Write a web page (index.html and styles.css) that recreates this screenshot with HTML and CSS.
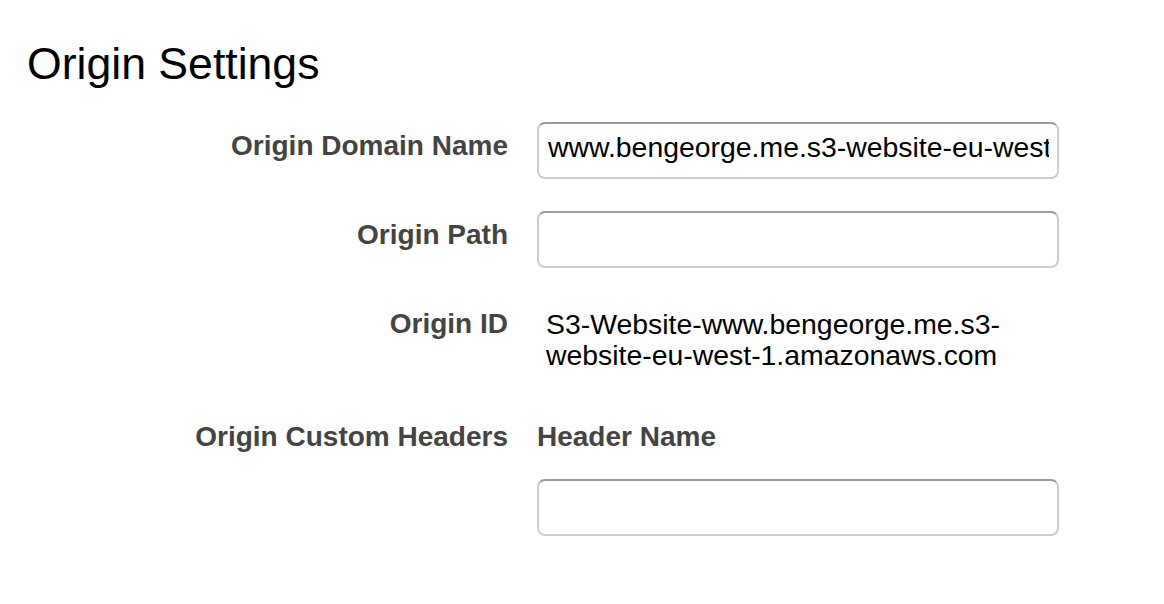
FILE: index.html
```html
<!DOCTYPE html>
<html lang="en">
<head>
<meta charset="utf-8">
<title>Origin Settings</title>
<link rel="stylesheet" href="styles.css">
</head>
<body>
<main class="page">
  <h1 class="title">Origin Settings</h1>
  <div class="form">
    <div class="row">
      <label class="label" for="domain">Origin Domain Name</label>
      <div class="value">
        <input class="field" id="domain" type="text" value="www.bengeorge.me.s3-website-eu-west-1.amazonaws.com">
      </div>
    </div>
    <div class="row">
      <label class="label" for="path">Origin Path</label>
      <div class="value">
        <input class="field" id="path" type="text" value="">
      </div>
    </div>
    <div class="row">
      <div class="label">Origin ID</div>
      <div class="value text">S3-Website-www.bengeorge.me.s3-website-eu-west-1.amazonaws.com</div>
    </div>
    <div class="row row-headers">
      <div class="label">Origin Custom Headers</div>
      <div class="value">
        <div class="subhead">Header Name</div>
        <input class="field field-header" type="text" value="">
      </div>
    </div>
  </div>
</main>
</body>
</html>
```
FILE: styles.css
```css
html, body {
  margin: 0;
  padding: 0;
  background: #fff;
}

body {
  font-family: "Liberation Sans", Arial, Helvetica, sans-serif;
  color: #000;
}

.title {
  margin: 39px 0 0 27px;
  font-size: 44.6px;
  line-height: 50px;
  font-weight: normal;
  color: #000;
}

.form {
  display: flex;
  flex-direction: column;
  gap: 32px;
  margin-top: 33px;
}

.row {
  display: grid;
  grid-template-columns: 508px 522px;
  column-gap: 29px;
  align-items: start;
}

.label {
  padding-top: 8px;
  text-align: right;
  font-weight: bold;
  font-size: 28px;
  line-height: 32px;
  color: #444;
}

.field {
  display: block;
  box-sizing: border-box;
  width: 522px;
  height: 57px;
  margin: 0;
  border: 2px solid #cccccc;
  border-top-color: #9a9a9a;
  border-radius: 8px;
  padding: 0 8px 6px 9px;
  background: #fff;
  font-family: "Liberation Sans", Arial, Helvetica, sans-serif;
  font-size: 28.4px;
  color: #000;
  outline: none;
}

.text {
  padding: 9px 0 0 9px;
  font-size: 28.4px;
  line-height: 31px;
  color: #000;
}

.row-headers {
  margin-top: 10px;
}

.subhead {
  padding-top: 8px;
  font-weight: bold;
  font-size: 28px;
  line-height: 32px;
  color: #444;
}

.field-header {
  margin-top: 26px;
}
```
